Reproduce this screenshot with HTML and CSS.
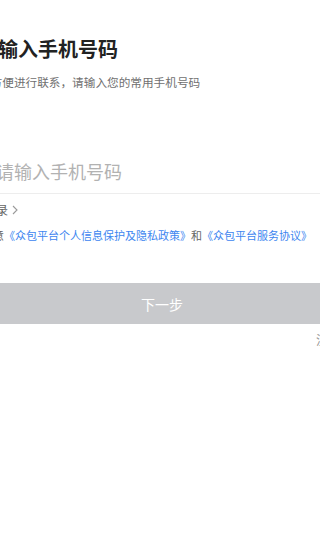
FILE: index.html
```html
<!DOCTYPE html>
<html lang="zh-CN">
<head>
<meta charset="utf-8">
<meta name="viewport" content="width=320">
<title>输入手机号码</title>
<link rel="stylesheet" href="styles.css">
</head>
<body>
<div class="page">
  <h1 class="title">请输入手机号码</h1>
  <p class="subtitle">为方便进行联系，请输入您的常用手机号码</p>
  <div class="field">
    <input class="phone" type="tel" placeholder="请输入手机号码">
  </div>
  <div class="switch">
    <span class="switch-text">登录</span>
    <svg class="chev" width="6" height="10" viewBox="0 0 6 10"><path d="M1 1 L5 5 L1 9" fill="none" stroke="#9a9a9a" stroke-width="1.1"/></svg>
  </div>
  <p class="agree">同意<a class="link">《众包平台个人信息保护及隐私政策》</a>和<a class="link">《众包平台服务协议》</a></p>
  <button class="next">下一步</button>
  <div class="extra"><span class="extra-text">注册</span></div>
</div>
</body>
</html>
```
FILE: styles.css
```css
html, body {
  margin: 0;
  padding: 0;
  overflow: hidden;
  background: #ffffff;
}
body {
  width: 320px;
  height: 559px;
  font-family: "Noto Sans CJK SC", "Noto Sans", sans-serif;
}
.page {
  width: 368px;
  margin-left: -22px;
  display: flex;
  flex-direction: column;
}
.title {
  margin: 35px 0 0 0;
  font-size: 20px;
  line-height: 28px;
  font-weight: 600;
  color: #222222;
}
.subtitle {
  margin: 10px 0 0 0;
  padding-left: 1px;
  font-size: 11.65px;
  line-height: 18px;
  color: #707070;
}
.field {
  margin-top: 58px;
  height: 44px;
  border-bottom: 1px solid #ededed;
  display: flex;
  align-items: center;
}
.phone {
  border: 0;
  outline: none;
  padding: 0 0 0 18px;
  margin: 0;
  width: 100%;
  font-family: inherit;
  font-size: 18px;
  line-height: 24px;
  color: #222;
  background: transparent;
}
.phone::placeholder {
  color: #b2b2b2;
}
.switch {
  margin-top: 7px;
  padding-left: 6px;
  height: 18px;
  display: flex;
  align-items: center;
  gap: 4px;
}
.switch-text {
  font-size: 12px;
  line-height: 18px;
  color: #666666;
}
.chev {
  display: block;
}
.agree {
  margin: 8px 0 0 0;
  padding-left: 4px;
  font-size: 11px;
  line-height: 16px;
  color: #666666;
  white-space: nowrap;
}
.link {
  color: #3d86f0;
}
.next {
  margin-top: 40px;
  height: 41px;
  border: 0;
  padding: 0;
  background: #c8c9cc;
  color: #ffffff;
  font-family: inherit;
  font-size: 14px;
}
.extra {
  margin-top: 8px;
  padding-right: 6px;
  display: flex;
  justify-content: flex-end;
}
.extra-text {
  font-size: 12px;
  line-height: 16px;
  color: #999999;
}
```
